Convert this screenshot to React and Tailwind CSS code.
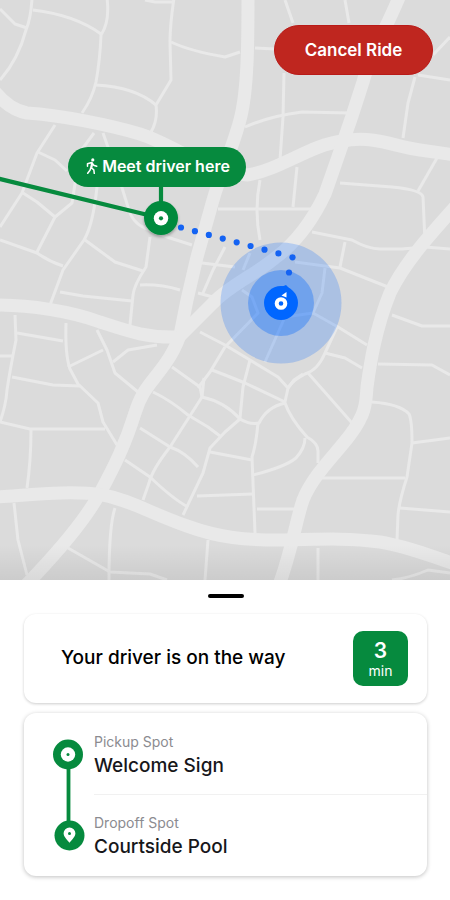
const majorRoads = [
  "M-5 92 Q10 110 27 113 C60 115 110 125 140 134 C175 145 205 172 247 175 C280 170 310 145 342 141 C375 135 395 147 420 150 L455 155",
  "M248 -5 C248 40 248 90 240 120 C232 150 220 175 213 200 L197 257 L187 300 L180 335 Q175 350 165 364 C150 385 142 390 135 413 C125 445 115 465 100 493 C85 520 60 550 26 585",
  "M400 -5 C388 25 370 55 363 82 L352 116 L340 151 L325 194 C315 215 300 240 275 258 C255 275 230 285 213 303 L178 338",
  "M455 207 C430 235 405 262 390 293 C375 330 370 365 367 387 C366 405 365 415 350 435 C335 455 313 475 303 500 C296 520 292 550 279 585",
  "M-5 305 C30 305 70 311 100 322 C125 330 145 338 177 337",
  "M-5 497 C30 495 70 490 103 495 C130 500 150 513 187 526 C220 538 245 540 280 540 C325 539 350 538 380 542 C410 547 430 556 455 564",
];

const minorRoads = [
  "M32 -2 Q31 18 26 30 Q18 60 0 80",
  "M0 9 L15 24 L27 28",
  "M33 10 Q75 15 101 34",
  "M107 -2 Q110 22 101 35 Q100 60 96 82 Q92 99 82 113",
  "M96 85 Q135 87 156 105",
  "M174 -2 Q170 25 170 42 L171 80 L156 105 Q158 120 151 132",
  "M171 42 Q190 51 225 57 L240 52",
  "M145 0 L155 2 L174 2",
  "M55 125 L37 153 L22 193 L0 227",
  "M38 152 L55 160 L67 171",
  "M94 133 L80 152 L72 203 L55 217 L37 252",
  "M103 133 L109 150 L118 175 L128 207 Q132 223 145 228 L170 238 L192 245",
  "M97 187 Q93 225 84 240 L63 270 L50 305",
  "M23 193 L37 202 L55 217",
  "M0 240 L37 253 Q50 262 63 266",
  "M85 240 L115 262 L143 271",
  "M150 237 L146 267 Q134 285 133 295 L130 325",
  "M140 285 Q160 284 180 290",
  "M60 292 L83 296 L132 301",
  "M202 263 L235 267",
  "M225 247 L213 270 L203 293 M198 293 L213 297",
  "M218 209 L312 209",
  "M285 0 L293 23",
  "M345 0 L349 23",
  "M255 48 L275 49",
  "M284 73 L283 117 L280 160",
  "M245 127 Q270 116 302 112 L350 113",
  "M450 37 L433 55",
  "M418 75 L450 80 M415 77 L408 103 L403 138",
  "M260 180 Q254 210 260 240",
  "M297 167 L293 207",
  "M340 183 L392 187 Q422 190 423 197 L425 243",
  "M418 191 L437 158",
  "M312 232 L352 240 Q368 249 380 249 L402 249 L425 247 L450 249",
  "M345 242 L340 267",
  "M295 262 L340 268 L388 287",
  "M392 315 L422 326 L450 326",
  "M378 364 L432 365 L450 375",
  "M325 353 L345 358 L362 368",
  "M313 313 L338 327 L367 345",
  "M325 268 L322 293 L313 313",
  "M337 327 L325 353 Q318 370 305 374 Q292 381 288 388",
  "M308 373 L323 390 L352 423",
  "M200 332 L225 345 L250 360 L278 377 L288 388 L285 402",
  "M225 347 L258 313 L252 297 L242 290",
  "M313 313 L285 317 L265 362",
  "M250 360 L243 387 L240 418",
  "M212 370 L225 375 L245 383 L285 402",
  "M243 270 L250 253",
  "M225 347 L210 372 L198 388",
  "M172 367 L200 387 L202 397",
  "M15 315 L16 340 Q10 370 7 390 Q6 405 0 422",
  "M17 333 L63 341 M0 356 L12 356",
  "M66 323 Q65 355 70 369 L78 384 L98 403 L103 422 L117 445",
  "M68 367 L103 350",
  "M97 330 L107 350 L115 373 L138 392",
  "M113 362 L128 350 L157 345",
  "M12 377 L53 385 L80 386",
  "M0 422 L30 429 L105 429",
  "M31 430 Q31 460 27 488",
  "M153 392 Q170 400 188 415 L208 427 L220 436",
  "M140 428 L170 447 Q185 452 198 467",
  "M125 460 L150 477 Q173 499 188 507",
  "M204 378 L202 397 L170 447 Q152 470 149 483 L143 500",
  "M202 397 Q225 402 240 419 L225 432 L210 448 L203 473 L183 515",
  "M210 452 L252 460",
  "M197 496 L253 494",
  "M115 508 Q109 525 109 580",
  "M68 548 L110 572 L150 574 L167 580",
  "M208 540 L205 580",
  "M14 503 L18 540 L27 575",
  "M240 419 Q250 425 259 423 Q267 407 285 403 Q290 418 307 437 Q318 443 318 451 L318 463",
  "M258 423 Q256 445 252 457 L255 533",
  "M253 475 Q285 467 296 458 Q305 448 305 438",
  "M257 509 L295 509",
  "M322 478 L405 478",
  "M372 402 Q400 404 409 414 Q412 420 412 443 L407 477 Q399 502 398 515 L397 540",
  "M412 443 L450 438",
  "M400 508 L450 512",
  "M318 548 L318 580",
  "M392 580 Q410 578 428 570 L450 573",
  "M288 388 L294 380 L303 374",
];

function CityMap() {
  return (
    <svg
      className="block h-full w-full"
      viewBox="0 0 450 580"
      preserveAspectRatio="xMinYMin slice"
      role="img"
      aria-label="Map of your walk to the pickup spot"
    >
      <defs>
        <linearGradient id="map-fade" x1="0" y1="0" x2="0" y2="1">
          <stop offset="0" stopColor="#000" stopOpacity="0" />
          <stop offset="1" stopColor="#000" stopOpacity="0.07" />
        </linearGradient>
        <filter id="pin-shadow" x="-30%" y="-30%" width="160%" height="170%">
          <feDropShadow dx="0" dy="2" stdDeviation="1.5" floodOpacity="0.3" />
        </filter>
      </defs>
      <rect width="450" height="580" fill="#dbdbdb" />
      <g fill="none" stroke="#e9e9e9" strokeLinejoin="round">
        {minorRoads.map((d) => (
          <path key={d} d={d} strokeWidth="3" />
        ))}
        {majorRoads.map((d) => (
          <path key={d} d={d} strokeWidth="13" />
        ))}
      </g>
      <rect y="545" width="450" height="35" fill="url(#map-fade)" />

      <circle cx="281" cy="303" r="60.5" fill="#0066ff" fillOpacity="0.22" />
      <circle cx="281" cy="303" r="33" fill="#0066ff" fillOpacity="0.34" />
      <path
        d="M181 227.500 L290 256.500"
        stroke="#1463f3"
        strokeWidth="6.200"
        strokeLinecap="round"
        strokeDasharray="0 14.400"
      />
      <circle cx="292.500" cy="257.300" r="3.100" fill="#1463f3" />
      <circle cx="289" cy="272.500" r="3.100" fill="#1463f3" />
      <path d="M274 290 L286 285 L293 292 Z" fill="#0066ff" />
      <circle cx="281" cy="303" r="17" fill="#0066ff" />
      <circle cx="281" cy="303.500" r="4.300" fill="none" stroke="#fff" strokeWidth="4" />
      <circle cx="281" cy="303.500" r="1.300" fill="#0066ff" />
      <path d="M281.500 295.500 L286.500 292 L286.500 297.500 Z" fill="#fff" />

      <path d="M-2 178.500 L150 215.500 M161 184 V204" stroke="#068a3e" strokeWidth="4.200" />
      <circle cx="161" cy="218" r="17" fill="#068a3e" filter="url(#pin-shadow)" />
      <circle cx="161" cy="218.300" r="7.200" fill="#fff" />
      <circle cx="161" cy="218.300" r="2.100" fill="#068a3e" />
    </svg>
  );
}

function WalkIcon() {
  return (
    <svg className="h-4 w-3" viewBox="0 0 12 16" aria-hidden="true">
      <circle cx="6.800" cy="1.900" r="1.600" fill="#fff" />
      <path
        d="M1.500 8.300 V5.800 L5.800 4.500 L7.600 7.200 L10.700 8.200 M5.800 4.800 L5 9.500 L7.800 11.800 L8.300 15.500 M4.900 9.500 L4 12.300 L1.700 15.300"
        fill="none"
        stroke="#fff"
        strokeWidth="1.500"
        strokeLinecap="round"
        strokeLinejoin="round"
      />
      <path d="M5.300 4.600 L7.100 5.200 L6.500 9.800 L4.700 9.500 Z" fill="#fff" />
    </svg>
  );
}

function TripLine() {
  return (
    <svg className="h-28 w-8 shrink-0" viewBox="0 0 32 112" aria-hidden="true">
      <path d="M15.500 16 V96" stroke="#068a3e" strokeWidth="3.800" />
      <circle cx="15" cy="15.500" r="15" fill="#068a3e" />
      <circle cx="15" cy="15.500" r="7.200" fill="#fff" />
      <circle cx="15" cy="15.500" r="1.500" fill="#068a3e" />
      <circle cx="16.500" cy="96.500" r="15" fill="#068a3e" />
      <path
        d="M16.500 103.800 C13 99.500 10.600 97.400 10.600 94.300 A5.900 5.900 0 0 1 22.400 94.300 C22.400 97.400 20 99.500 16.500 103.800 Z"
        fill="#fff"
      />
      <circle cx="16.500" cy="94.500" r="1.500" fill="#068a3e" />
    </svg>
  );
}

function Stop({ label, place }) {
  return (
    <div className="flex h-20 flex-col justify-center pt-1">
      <dt className="text-sm leading-5 text-[#8b8b90]">{label}</dt>
      <dd className="text-[19px] leading-7 font-medium text-[#17171a]">{place}</dd>
    </div>
  );
}

export default function App() {
  return (
    <main className="flex min-h-screen flex-col bg-white font-['Inter','Liberation_Sans',sans-serif] text-black">
      <section className="relative h-[580px] overflow-hidden bg-[#dbdbdb]">
        <CityMap />
        <button
          type="button"
          className="absolute top-[25px] right-[17px] h-[50px] w-[159px] rounded-full border border-[#b91a18] bg-[#bf261f] pt-0.5 text-[17px] font-semibold text-white"
        >
          Cancel Ride
        </button>
        <div className="absolute top-[147px] left-[68px] flex h-10 w-[178px] items-center justify-center gap-1 rounded-full bg-[#068a3e] pb-0.5 pl-0.5 text-base font-semibold whitespace-nowrap text-white">
          <WalkIcon />
          Meet driver here
        </div>
      </section>

      <section className="flex flex-col pt-[14px] pr-[23px] pb-6 pl-6">
        <div className="h-1 w-9 self-center rounded-full bg-black" />
        <div className="mt-4 flex h-[89px] items-center justify-between rounded-xl pr-[19px] pl-[37px] shadow-[0_1px_3px_rgba(0,0,0,0.2)]">
          <h1 className="text-[19px] font-medium">Your driver is on the way</h1>
          <div className="flex h-[55px] w-[55px] flex-col items-center justify-center rounded-[10px] bg-[#068a3e] text-white">
            <span className="text-[21px] leading-6 font-semibold">3</span>
            <span className="text-sm leading-4">min</span>
          </div>
        </div>
        <div className="mt-[10px] flex h-[163px] items-center gap-[9px] rounded-xl pl-[29px] shadow-[0_1px_4px_rgba(0,0,0,0.25)]">
          <TripLine />
          <dl className="grow divide-y divide-[#f1f1f1]">
            <Stop label="Pickup Spot" place="Welcome Sign" />
            <Stop label="Dropoff Spot" place="Courtside Pool" />
          </dl>
        </div>
      </section>
    </main>
  );
}
